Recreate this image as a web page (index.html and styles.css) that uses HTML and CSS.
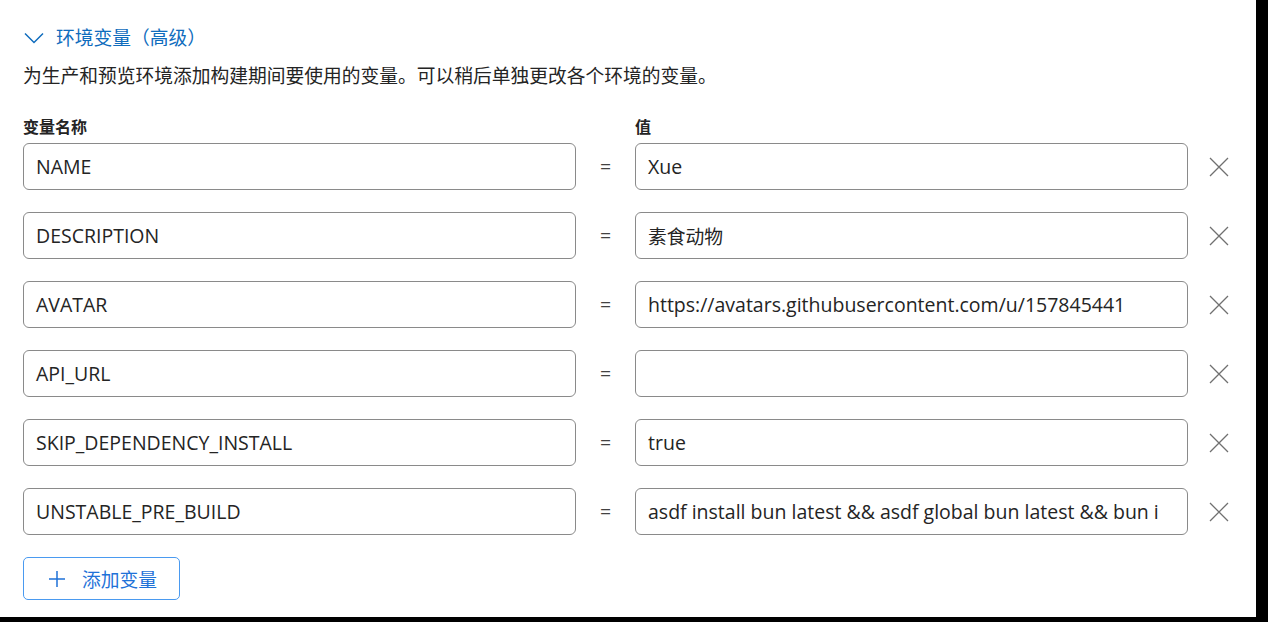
FILE: index.html
```html
<!DOCTYPE html>
<html lang="zh-CN">
<head>
<meta charset="utf-8">
<title>环境变量</title>
<link rel="stylesheet" href="styles.css">
</head>
<body>
<div class="page">
  <div class="header">
    <svg class="chevron" width="20" height="20" viewBox="0 0 20 20"><path d="M1 5.5 L10 14.5 L19 5.5" fill="none" stroke="#0f6cbd" stroke-width="1.5"/></svg>
    <span class="title">环境变量（高级）</span>
  </div>
  <p class="desc">为生产和预览环境添加构建期间要使用的变量。可以稍后单独更改各个环境的变量。</p>
  <div class="grid">
    <div class="label">变量名称</div><div></div><div class="label">值</div><div></div>

    <div class="field">NAME</div><div class="eq">=</div><div class="field">Xue</div>
    <div class="del"><svg width="20" height="20" viewBox="0 0 20 20"><path d="M1 1 L19 19 M19 1 L1 19" stroke="#707070" stroke-width="1.3"/></svg></div>

    <div class="field">DESCRIPTION</div><div class="eq">=</div><div class="field"><span class="cjk">素食动物</span></div>
    <div class="del"><svg width="20" height="20" viewBox="0 0 20 20"><path d="M1 1 L19 19 M19 1 L1 19" stroke="#707070" stroke-width="1.3"/></svg></div>

    <div class="field">AVATAR</div><div class="eq">=</div><div class="field">https://avatars.githubusercontent.com/u/157845441</div>
    <div class="del"><svg width="20" height="20" viewBox="0 0 20 20"><path d="M1 1 L19 19 M19 1 L1 19" stroke="#707070" stroke-width="1.3"/></svg></div>

    <div class="field">API_URL</div><div class="eq">=</div><div class="field"></div>
    <div class="del"><svg width="20" height="20" viewBox="0 0 20 20"><path d="M1 1 L19 19 M19 1 L1 19" stroke="#707070" stroke-width="1.3"/></svg></div>

    <div class="field">SKIP_DEPENDENCY_INSTALL</div><div class="eq">=</div><div class="field">true</div>
    <div class="del"><svg width="20" height="20" viewBox="0 0 20 20"><path d="M1 1 L19 19 M19 1 L1 19" stroke="#707070" stroke-width="1.3"/></svg></div>

    <div class="field">UNSTABLE_PRE_BUILD</div><div class="eq">=</div><div class="field">asdf install bun latest &amp;&amp; asdf global bun latest &amp;&amp; bun i</div>
    <div class="del"><svg width="20" height="20" viewBox="0 0 20 20"><path d="M1 1 L19 19 M19 1 L1 19" stroke="#707070" stroke-width="1.3"/></svg></div>
  </div>
  <button class="add">
    <svg width="18" height="18" viewBox="0 0 18 18"><path d="M9 1 V17 M1 9 H17" stroke="#1f72d8" stroke-width="1.5"/></svg>
    <span>添加变量</span>
  </button>
</div>
</body>
</html>
```
FILE: styles.css
```css
html, body {
  margin: 0;
  background: #000;
}
.page {
  width: 1256px;
  height: 617px;
  background: #fff;
  box-sizing: border-box;
  padding: 24px 0 0 23px;
  font-family: "Open Sans", "Noto Sans CJK SC", sans-serif;
  color: #242424;
}
.header {
  display: flex;
  align-items: center;
  height: 28px;
}
.chevron {
  margin-left: 1px;
}
.title {
  margin-left: 12px;
  font-size: 18.75px;
  color: #0f6cbd;
  line-height: 28px;
}
.desc {
  margin: 10px 0 0;
  font-size: 18.75px;
  line-height: 28px;
}
.grid {
  margin-top: 26px;
  display: grid;
  grid-template-columns: 553px 59px 553px 62px;
  row-gap: 22px;
  align-items: center;
}
.label {
  font-size: 16px;
  font-weight: bold;
  line-height: 22px;
  margin-bottom: -17px;
}
.field {
  height: 47px;
  box-sizing: border-box;
  border: 1px solid #8a8a8a;
  border-radius: 6px;
  padding: 0 12px;
  display: flex;
  align-items: center;
  font-size: 19.5px;
  white-space: nowrap;
  overflow: hidden;
}
.cjk {
  font-size: 18.75px;
}
.eq {
  text-align: center;
  font-size: 19.5px;
  color: #424242;
}
.del {
  display: flex;
  justify-content: center;
  align-items: center;
}
.add {
  margin-top: 22px;
  width: 157px;
  height: 43px;
  box-sizing: border-box;
  border: 1px solid #4a9af0;
  border-radius: 5px;
  background: #fff;
  display: flex;
  align-items: center;
  padding: 0 0 0 24px;
  gap: 16px;
  font-family: "Open Sans", "Noto Sans CJK SC", sans-serif;
  font-size: 18.75px;
  color: #1f72d8;
}
```
